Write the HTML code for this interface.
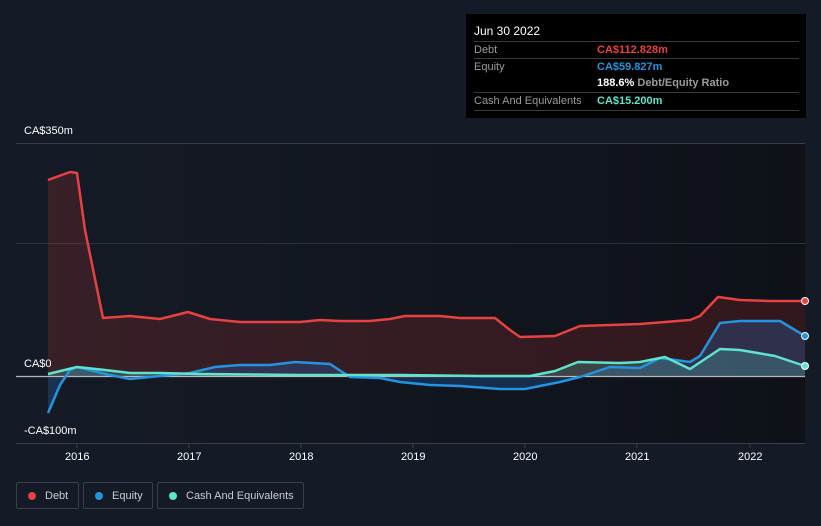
<!DOCTYPE html>
<html><head><meta charset="utf-8">
<style>
body{margin:0;width:821px;height:526px;background:#151b26;font-family:"Liberation Sans",sans-serif;overflow:hidden;position:relative;color:#fff}
.tt{position:absolute;left:466px;top:14px;width:340px;height:104px;background:#000;font-size:11px}
.tt .h{position:absolute;left:8px;top:10px;font-size:12px;color:#fff}
.row{position:absolute;left:8px;width:325px;border-top:1px solid #3a3a3a;height:17px;line-height:17px;color:#9a9a9a}
.row span{position:absolute;left:123px;font-weight:bold}
.lab{position:absolute;font-size:11px;color:#fff}
.leg{position:absolute;top:482px;height:27px;border:1px solid #3a3f4a;border-radius:2px;font-size:11px;color:#ccc;line-height:27px;box-sizing:border-box}
.leg i{position:absolute;left:11px;top:9px;width:8px;height:8px;border-radius:50%}
</style></head><body>
<svg width="821" height="526" style="position:absolute;left:0;top:0">
<defs><linearGradient id="bg" x1="0" x2="1"><stop offset="0" stop-color="#151b26"/><stop offset="1" stop-color="#0e1118"/></linearGradient></defs>
<rect x="16" y="143" width="789" height="300" fill="url(#bg)"/>
<line x1="16" y1="143.5" x2="805" y2="143.5" stroke="#3a3e47"/>
<line x1="16" y1="243.5" x2="805" y2="243.5" stroke="#2c3039"/>
<line x1="16" y1="443.5" x2="805" y2="443.5" stroke="#3a3e47"/>
<g stroke="#3a3e47"><line x1="77" y1="443" x2="77" y2="448"/><line x1="189" y1="443" x2="189" y2="448"/><line x1="301" y1="443" x2="301" y2="448"/><line x1="413" y1="443" x2="413" y2="448"/><line x1="525" y1="443" x2="525" y2="448"/><line x1="637" y1="443" x2="637" y2="448"/><line x1="750" y1="443" x2="750" y2="448"/></g>
<polygon fill="rgba(229,57,53,0.17)" points="48,376 48,180 70,172 77,173 85,230 103,318 130,316 160,319 188,312 210,319 240,322 270,322 300,322 320,320 340,321 370,321 390,319 405,316 440,316 460,318 495,318 510,330 520,337 555,336 580,326 640,324 690,320 700,316 718,297 740,300 770,301 805,301 805,376"/>
<polygon fill="rgba(40,120,220,0.25)" points="48,376 48,413 60,385 70,370 77,367 110,375 130,379 150,377 190,373 215,367 240,365 270,365 295,362 330,364 350,377 380,378 400,382 430,385 460,386 500,389 525,389 560,382 580,377 610,367 640,368 660,358 690,362 700,356 720,323 740,321 780,321 805,336 805,376"/>
<polygon fill="rgba(90,220,200,0.22)" points="48,376 48,374 77,367 105,370 130,373 160,373 200,374 300,375 400,375 480,376 530,376 555,371 578,362 620,363 640,362 665,357 690,369 720,349 740,350 775,356 805,366 805,376"/>
<line x1="16" y1="376.5" x2="805" y2="376.5" stroke="#b8b8b8" stroke-width="1.2"/>
<polyline fill="none" stroke="#e84142" stroke-width="2.5" stroke-linejoin="round" points="48,180 70,172 77,173 85,230 103,318 130,316 160,319 188,312 210,319 240,322 270,322 300,322 320,320 340,321 370,321 390,319 405,316 440,316 460,318 495,318 510,330 520,337 555,336 580,326 640,324 690,320 700,316 718,297 740,300 770,301 805,301"/>
<polyline fill="none" stroke="#2394df" stroke-width="2.5" stroke-linejoin="round" points="48,413 60,385 70,370 77,367 110,375 130,379 150,377 190,373 215,367 240,365 270,365 295,362 330,364 350,377 380,378 400,382 430,385 460,386 500,389 525,389 560,382 580,377 610,367 640,368 660,358 690,362 700,356 720,323 740,321 780,321 805,336"/>
<polyline fill="none" stroke="#5fe3cc" stroke-width="2.5" stroke-linejoin="round" points="48,374 77,367 105,370 130,373 160,373 200,374 300,375 400,375 480,376 530,376 555,371 578,362 620,363 640,362 665,357 690,369 720,349 740,350 775,356 805,366"/>
<circle cx="805" cy="301" r="3.5" fill="#e84142" stroke="#fff" stroke-width="1"/>
<circle cx="805" cy="336" r="3.5" fill="#2394df" stroke="#fff" stroke-width="1"/>
<circle cx="805" cy="366" r="3.5" fill="#5fe3cc" stroke="#fff" stroke-width="1"/>
</svg>
<div class="lab" style="left:24px;top:125px">CA$350m</div>
<div class="lab" style="left:24px;top:358px">CA$0</div>
<div class="lab" style="left:24px;top:425px">-CA$100m</div>
<div class="lab" style="left:65px;top:451px">2016</div>
<div class="lab" style="left:177px;top:451px">2017</div>
<div class="lab" style="left:289px;top:451px">2018</div>
<div class="lab" style="left:401px;top:451px">2019</div>
<div class="lab" style="left:513px;top:451px">2020</div>
<div class="lab" style="left:625px;top:451px">2021</div>
<div class="lab" style="left:738px;top:451px">2022</div>
<div class="tt">
<div class="h">Jun 30 2022</div>
<div class="row" style="top:27px">Debt<span style="color:#e84142">CA$112.828m</span></div>
<div class="row" style="top:44px">Equity<span style="color:#2394df">CA$59.827m</span></div>
<div class="row" style="top:61px;border-top:none"><span style="color:#fff">188.6% <b style="color:#9a9a9a">Debt/Equity Ratio</b></span></div>
<div class="row" style="top:78px">Cash And Equivalents<span style="color:#5fe3cc">CA$15.200m</span></div>
<div class="row" style="top:96px;height:0"></div>
</div>
<div class="leg" style="left:16px;width:63px"><i style="background:#e84142"></i><span style="position:absolute;left:28px">Debt</span></div>
<div class="leg" style="left:83px;width:70px"><i style="background:#2394df"></i><span style="position:absolute;left:28px">Equity</span></div>
<div class="leg" style="left:157px;width:147px"><i style="background:#5fe3cc"></i><span style="position:absolute;left:28px">Cash And Equivalents</span></div>
</body></html>
